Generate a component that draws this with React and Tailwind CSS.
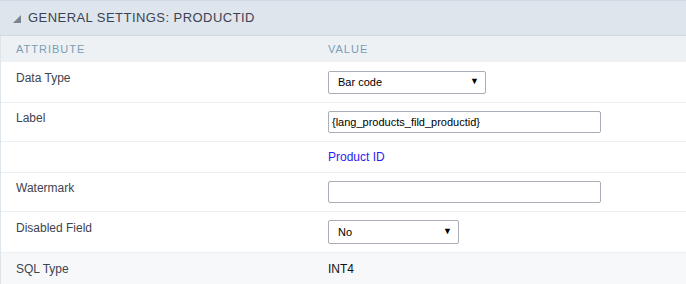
export default function App() {
  const font = { fontFamily: '"Liberation Sans", Arial, sans-serif' };
  return (
    <div className="w-[686px] h-[284px] overflow-hidden bg-white" style={font}>
      <div className="h-[36px] bg-[#dfe5ed] border-t border-b border-[#cfd9e1] flex items-center pl-[13px]">
        <svg width="8" height="8" viewBox="0 0 8 8" className="mr-[7px] mt-[1px]">
          <polygon points="8,0 8,8 0,8" fill="#7b8590" />
        </svg>
        <span className="text-[13px] tracking-[0.45px] text-[#3a4352]">GENERAL SETTINGS: PRODUCTID</span>
      </div>
      <div className="border-l border-[#dde4ea]">
        <div className="h-[26px] bg-[#edf1f4] flex items-center text-[11px] tracking-[1px] text-[#7a9db6]">
          <div className="w-[327px] shrink-0 pl-[15px]">ATTRIBUTE</div>
          <div>VALUE</div>
        </div>
        <div className="h-[41px] flex items-center border-b border-[#eceff3]">
          <div className="w-[327px] shrink-0 pl-[15px] text-[12px] text-[#3c4451] -mt-[9px]">Data Type</div>
          <div className="w-[158px] h-[23px] border border-[#a8aeb7] rounded-[2px] flex items-center justify-between pl-[9px] pr-[6px] text-[11px] text-black">
            <span>Bar code</span>
            <span className="text-[9px]">▼</span>
          </div>
        </div>
        <div className="h-[39px] flex items-center border-b border-[#eceff3]">
          <div className="w-[327px] shrink-0 pl-[15px] text-[12px] text-[#3c4451] -mt-[8px]">Label</div>
          <div className="w-[273px] h-[22px] border border-[#a8aeb7] rounded-[2px] flex items-center pl-[3px] text-[11px] text-black">
            {"{lang_products_fild_productid}"}
          </div>
        </div>
        <div className="h-[31px] flex items-center border-b border-[#eceff3]">
          <div className="w-[327px] shrink-0"></div>
          <div className="text-[12px] text-[#2a1cf0]">Product ID</div>
        </div>
        <div className="h-[39px] flex items-center border-b border-[#eceff3]">
          <div className="w-[327px] shrink-0 pl-[15px] text-[12px] text-[#3c4451] -mt-[9px]">Watermark</div>
          <div className="w-[273px] h-[22px] border border-[#a8aeb7] rounded-[2px]"></div>
        </div>
        <div className="h-[41px] flex items-center border-b border-[#eceff3]">
          <div className="w-[327px] shrink-0 pl-[15px] text-[12px] text-[#3c4451] -mt-[9px]">Disabled Field</div>
          <div className="w-[131px] h-[24px] border border-[#a8aeb7] rounded-[2px] flex items-center justify-between pl-[9px] pr-[6px] text-[11px] text-black">
            <span>No</span>
            <span className="text-[9px]">▼</span>
          </div>
        </div>
        <div className="h-[32px] flex items-center bg-[#f7f8fa]">
          <div className="w-[327px] shrink-0 pl-[15px] text-[12px] text-[#3c4451]">SQL Type</div>
          <div className="text-[12px] text-[#111]">INT4</div>
        </div>
      </div>
    </div>
  );
}
